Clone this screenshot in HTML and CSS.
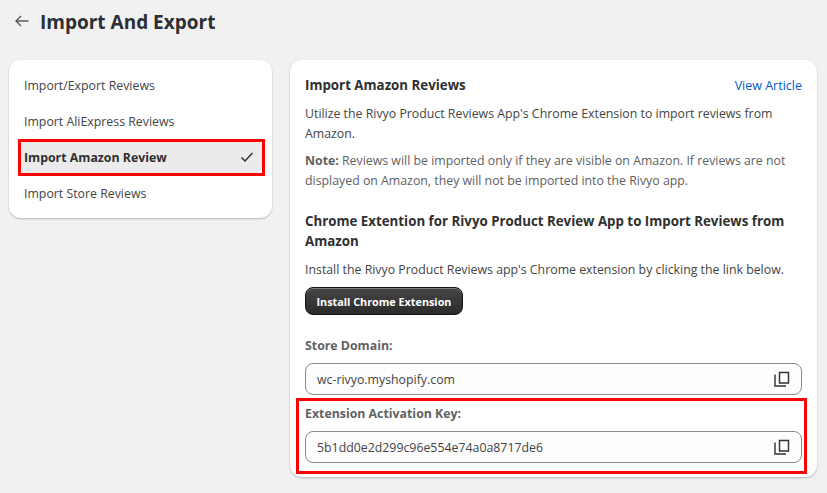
FILE: index.html
```html
<!DOCTYPE html>
<html lang="en">
<head>
<meta charset="utf-8">
<title>Import And Export</title>
<link rel="stylesheet" href="styles.css">
</head>
<body>
<div class="page">
  <header class="header">
    <svg class="back" width="16" height="16" viewBox="0 0 16 16" fill="none"><path d="M14.500 8H2M7 3 2 8l5 5" stroke="#5a5a5a" stroke-width="1.400"/></svg>
    <h1 class="title">Import And Export</h1>
  </header>
  <div class="layout">
    <nav class="card side">
      <div class="item">Import/Export Reviews</div>
      <div class="item">Import AliExpress Reviews</div>
      <div class="item selected">
        <span>Import Amazon Review</span>
        <svg width="16" height="16" viewBox="0 0 16 16" fill="none"><path d="M2.500 8.500 6 12l7.500-8" stroke="#303030" stroke-width="1.500"/></svg>
        <div class="mark mark-nav"></div>
      </div>
      <div class="item">Import Store Reviews</div>
    </nav>
    <main class="card content">
      <div class="head-row">
        <h2 class="h2">Import Amazon Reviews</h2>
        <a class="link">View Article</a>
      </div>
      <p class="p first">Utilize the Rivyo Product Reviews App's Chrome Extension to import reviews from Amazon.</p>
      <p class="p note"><b>Note:</b> Reviews will be imported only if they are visible on Amazon. If reviews are not displayed on Amazon, they will not be imported into the Rivyo app.</p>
      <h2 class="h2 sub">Chrome Extention for Rivyo Product Review App to Import Reviews from Amazon</h2>
      <p class="p install">Install the Rivyo Product Reviews app's Chrome extension by clicking the link below.</p>
      <button class="btn">Install Chrome Extension</button>
      <div class="field domain">
        <label class="label">Store Domain:</label>
        <div class="input"><span>wc-rivyo.myshopify.com</span>
          <svg class="copy" width="16" height="16" viewBox="0 0 16 16" fill="none"><path d="M5.500 1.500h9v10.500h-9z" stroke="#303030" stroke-width="1.400"/><path d="M1 3.500v11.500h11" stroke="#303030" stroke-width="1.400"/></svg>
        </div>
      </div>
      <div class="field key">
        <label class="label">Extension Activation Key:</label>
        <div class="input"><span>5b1dd0e2d299c96e554e74a0a8717de6</span>
          <svg class="copy" width="16" height="16" viewBox="0 0 16 16" fill="none"><path d="M5.500 1.500h9v10.500h-9z" stroke="#303030" stroke-width="1.400"/><path d="M1 3.500v11.500h11" stroke="#303030" stroke-width="1.400"/></svg>
        </div>
        <div class="mark mark-key"></div>
      </div>
    </main>
  </div>
</div>
</body>
</html>
```
FILE: styles.css
```css
* { box-sizing: border-box; }
html, body { margin: 0; height: 100%; overflow: hidden; }
body { background: #f1f1f1; font-family: "Open Sans", "Noto Sans", sans-serif; font-size: 12.330px; color: #303030; }
.page { padding: 0 10px 0 9px; }
.header { display: flex; align-items: center; height: 44px; padding-left: 5px; }
.back { margin-right: 10px; margin-top: -3px; }
.title { margin: 0; font-size: 19px; font-weight: 700; color: #2b2f33; line-height: 24px; }
.layout { display: flex; align-items: flex-start; gap: 18px; margin-top: 16px; }
.card { background: #fff; border-radius: 12px; box-shadow: 0 1px 2px rgba(0,0,0,.25); }
.side { width: 263px; height: 158px; padding: 7px 10px 7px 11px; flex: none; }
.item { position: relative; display: flex; align-items: center; justify-content: space-between; height: 36px; padding: 0 7px 0 4px; color: #444; }
.selected { background: #ebebeb; border-radius: 6px; font-weight: 700; color: #303030; height: 32px; margin: 2px 0; }
.mark { position: absolute; border: 3px solid #f00; pointer-events: none; }
.mark-nav { left: -2px; right: -3px; top: -2px; bottom: -3px; }
.content { width: 527px; height: 417px; padding: 16px 15px 0; }
.head-row { display: flex; justify-content: space-between; align-items: center; height: 18px; }
.h2 { margin: 0; font-size: 13.300px; font-weight: 700; line-height: 20px; color: #303030; }
.link { color: #005bd3; font-size: 12.500px; }
.p { margin: 0; line-height: 20px; color: #444; }
.first { margin-top: 10px; }
.note { margin-top: 7px; color: #616161; }
.sub { margin-top: 20px; }
.install { margin-top: 9px; }
.btn { display: block; margin-top: 7px; width: 158px; height: 28px; padding: 0; border: 1px solid #111; border-radius: 8px; background: linear-gradient(#454545, #2b2b2b); color: #fff; font: 700 10.800px "Open Sans", sans-serif; box-shadow: inset 0 1px 0 rgba(255,255,255,.3); }
.field { position: relative; }
.domain { margin-top: 21px; }
.key { margin-top: 9px; }
.label { display: block; font-weight: 700; color: #616161; line-height: 20px; }
.input { display: flex; align-items: center; justify-content: space-between; height: 32px; margin-top: 7px; padding: 0 11px; border: 1px solid #8a8a8a; border-radius: 8px; background: #fdfdfd; color: #444; }
.mark-key { left: -9px; right: -5px; top: -6px; bottom: -11px; }
```
